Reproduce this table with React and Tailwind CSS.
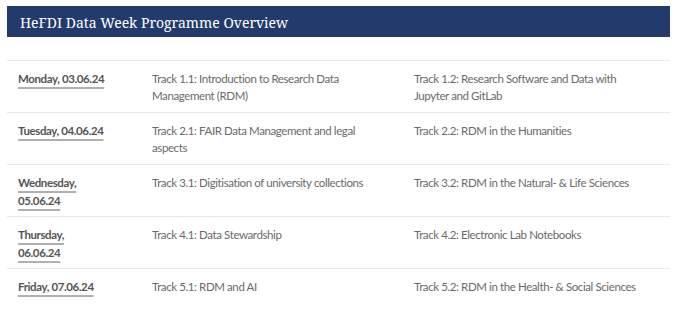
const rows = [
  { day: "Monday, 03.06.24", a: "Track 1.1: Introduction to Research Data Management (RDM)", b: "Track 1.2: Research Software and Data with Jupyter and GitLab" },
  { day: "Tuesday, 04.06.24", a: "Track 2.1: FAIR Data Management and legal aspects", b: "Track 2.2: RDM in the Humanities" },
  { day: "Wednesday, 05.06.24", a: "Track 3.1: Digitisation of university collections", b: "Track 3.2: RDM in the Natural- & Life Sciences" },
  { day: "Thursday, 06.06.24", a: "Track 4.1: Data Stewardship", b: "Track 4.2: Electronic Lab Notebooks" },
  { day: "Friday, 07.06.24", a: "Track 5.1: RDM and AI", b: "Track 5.2: RDM in the Health- & Social Sciences" },
];

export default function App() {
  return (
    <div className="w-[680px] h-[318px] bg-white pt-[6px] px-[7px] overflow-hidden">
      <div className="w-[663px] h-[31px] bg-[#223a6c] pl-[13px] flex items-center">
        <h1 className="text-white text-[14px] pt-[1px] font-['Noto_Serif',serif]">
          HeFDI Data Week Programme Overview
        </h1>
      </div>
      <div className="mt-[23px] w-[663px] border-t border-[#e8e8e8]">
        {rows.map((r) => (
          <div key={r.day} className="h-[52px] border-b border-[#e8e8e8] flex pt-[9px] text-[11.5px] leading-[17px] tracking-[-0.4px] font-['Lato',sans-serif]">
            <div className="w-[145px] pl-[11px] pr-[46px]">
              <span className="font-bold text-[#555] underline decoration-[#b0b0b0] decoration-2 underline-offset-[4px] leading-[18px]">{r.day}</span>
            </div>
            <div className="w-[262px] pr-[32px] text-[#6a6a6a]">{r.a}</div>
            <div className="flex-1 pr-[30px] text-[#6a6a6a]">{r.b}</div>
          </div>
        ))}
      </div>
    </div>
  );
}
